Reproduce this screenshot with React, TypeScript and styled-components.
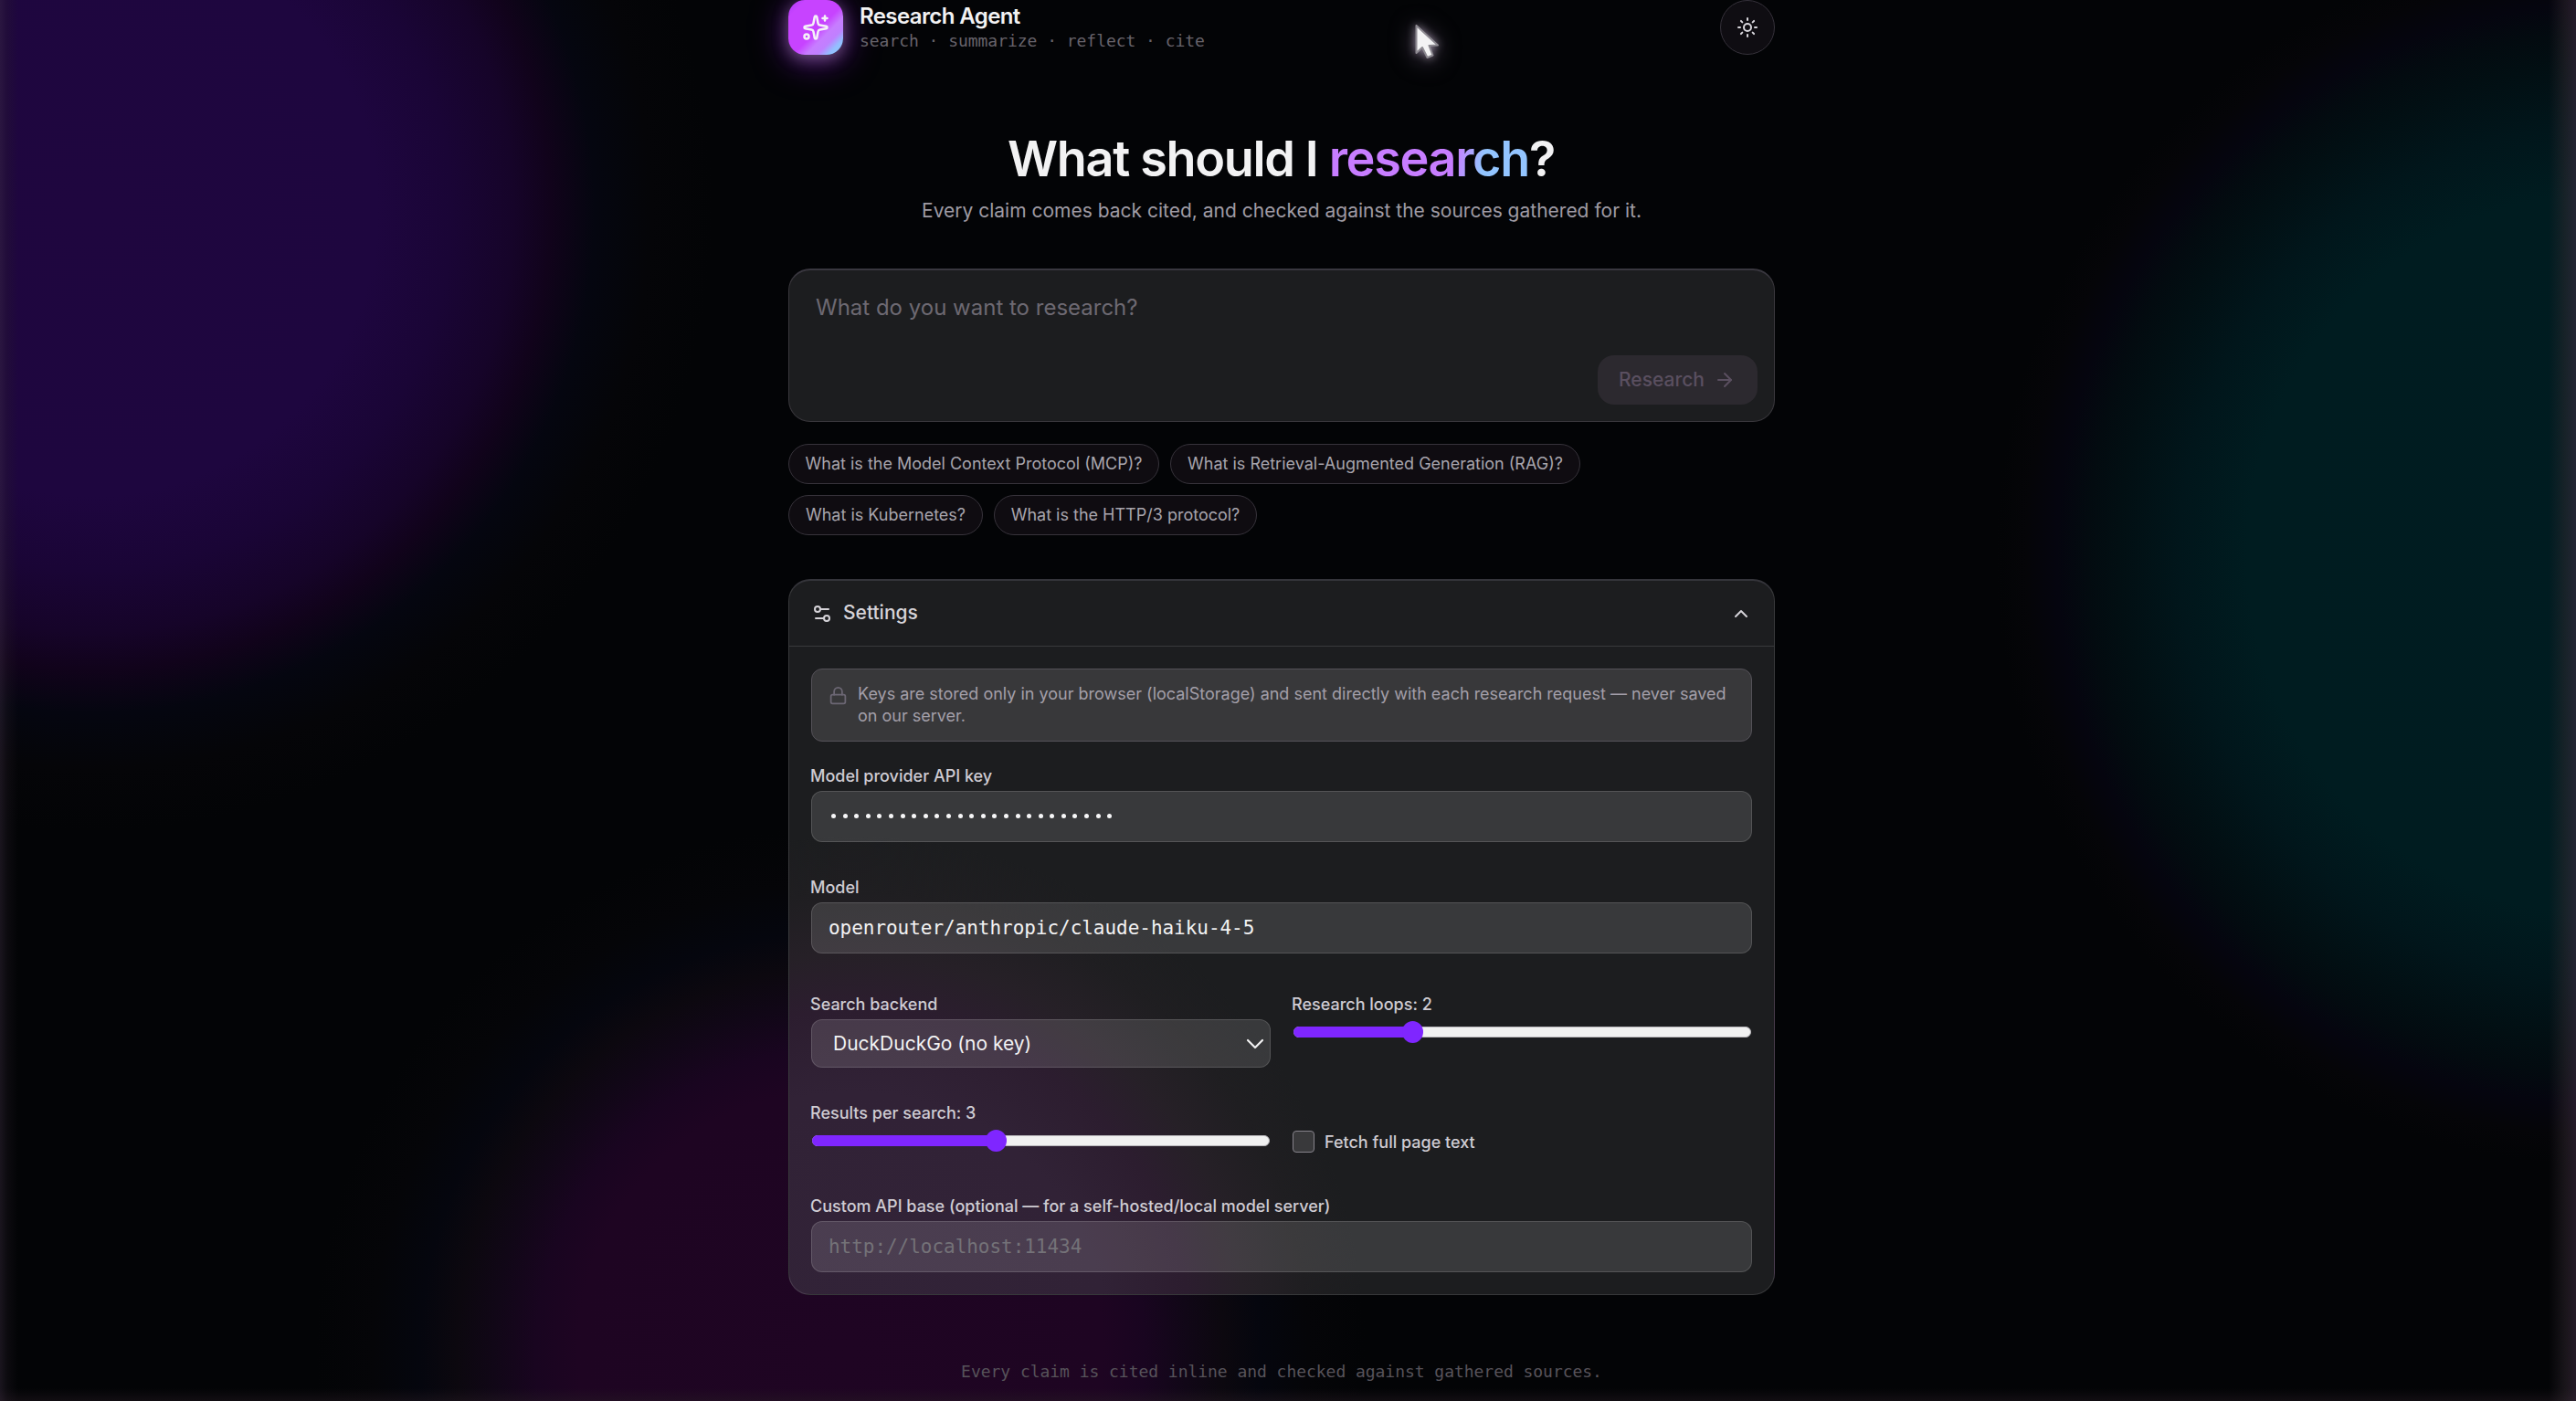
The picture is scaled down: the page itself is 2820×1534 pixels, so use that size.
import React from "react";
import styled, { createGlobalStyle } from "styled-components";
import { Sparkles, Sun, ArrowRight, Settings2, ChevronUp, ChevronDown, Lock } from "lucide-react";

const sans = `Inter, "Liberation Sans", sans-serif`;
const mono = `"DejaVu Sans Mono", "Liberation Mono", monospace`;

const Global = createGlobalStyle`
  *, *::before, *::after { box-sizing: border-box; }
  html, body { margin: 0; background: #030406; }
  body { overflow: hidden; font-family: ${sans}; color: #f2f2f3; }
`;

const Page = styled.div`
  position: relative;
  width: 100%;
  height: 1534px;
  overflow: hidden;
  background:
    linear-gradient(to right, rgba(60, 46, 66, 0.4) 0, rgba(40, 30, 42, 0.25) 8px, transparent 20px),
    linear-gradient(to left, rgba(70, 48, 72, 0.5) 0, rgba(52, 42, 50, 0.45) 12px, transparent 30px),
    linear-gradient(to top, rgba(40, 28, 36, 0.4) 0, transparent 14px),
    radial-gradient(circle 680px at 100px 230px, #1f063f 0, #1e063f 46%, #1a0536 58%, #160429 68%, #11031b 74%, #050610 81%, #050508 90%, rgba(3, 4, 6, 0) 100%),
    radial-gradient(circle 670px at 2855px 607px, #001c21 0, #001c20 59%, #01161b 70%, #020f13 80%, #030b10 85%, #05050f 90%, #050508 95%, rgba(3, 4, 6, 0) 100%),
    radial-gradient(circle 575px at 920px 1480px, #1f0523 0, #1e0522 50%, #190520 58%, #110717 66%, #0c080f 73%, #05060e 80%, #050508 89%, rgba(3, 4, 6, 0) 100%),
    #030406;
`;

const Column = styled.main`
  width: 1080px;
  margin-left: 863px;
  display: flex;
  flex-direction: column;
`;

const Header = styled.header`
  height: 60px;
  display: flex;
  align-items: center;
`;

const Logo = styled.div`
  width: 60px;
  height: 60px;
  border-radius: 18px;
  display: grid;
  place-items: center;
  color: #f5f2f8;
  background: linear-gradient(135deg, #ac38f8 0%, #c743ff 16%, #c743ff 54%, #c77dff 66%, #c080ff 76%, #93bfff 86%, #93c5ff 100%);
  box-shadow: 0 4px 16px rgba(125, 105, 135, 0.75), 0 6px 38px rgba(120, 20, 190, 0.75);
`;

const Brand = styled.div`
  margin-left: 18px;
  display: flex;
  flex-direction: column;
  flex: 1;
`;

const BrandName = styled.span`
  font-size: 24px;
  line-height: 30px;
  font-weight: 600;
  letter-spacing: -0.6px;
`;

const BrandTag = styled.span`
  font-family: ${mono};
  font-size: 18px;
  line-height: 24px;
  letter-spacing: -0.04px;
  color: #67636b;
`;

const ThemeButton = styled.button`
  width: 60px;
  height: 60px;
  padding: 0;
  border-radius: 50%;
  border: 1px solid #35313a;
  background: #0f0d12;
  color: #d8d6dc;
  display: grid;
  place-items: center;
`;

const Hero = styled.section`
  margin-top: 81px;
  text-align: center;
`;

const Title = styled.h1`
  margin: 0 0 0 -1px;
  font-size: 54px;
  line-height: 66px;
  font-weight: 600;
  letter-spacing: -1.35px;
`;

const Accent = styled.span`
  background: linear-gradient(100deg, #c77dff 0%, #c77dff 62%, #93c5ff 76%, #93c5ff 100%);
  -webkit-background-clip: text;
  background-clip: text;
  color: transparent;
`;

const Lead = styled.p`
  margin: 8px 0 0;
  font-size: 21px;
  line-height: 32px;
  color: #9f9ba4;
`;

const Composer = styled.section`
  margin-top: 47px;
  height: 168px;
  border: 1px solid #39373c;
  border-top: 2px solid #39373f;
  border-radius: 24px;
  background: #1c1d1f;
  padding: 23px 18px 18px 29px;
  display: flex;
  flex-direction: column;
  justify-content: space-between;
`;

const Prompt = styled.div`
  font-size: 24px;
  line-height: 36px;
  color: #6d6972;
`;

const Submit = styled.button`
  align-self: flex-end;
  width: 175px;
  height: 54px;
  padding: 0 24px 0 23px;
  border: 0;
  border-radius: 18px;
  background: #2c292f;
  color: #5a4f60;
  font: 500 21px/30px ${sans};
  display: flex;
  align-items: center;
  justify-content: space-between;
`;

const Chips = styled.div`
  margin-top: 24px;
  width: 960px;
  display: flex;
  flex-wrap: wrap;
  gap: 12px;
`;

const Chip = styled.button<{ $w: number }>`
  width: ${(p) => p.$w}px;
  height: 44px;
  padding: 0;
  border: 1px solid #37333b;
  border-radius: 22px;
  background: #0f0c11;
  color: #a8a5ad;
  font: 400 18px/24px ${sans};
  white-space: nowrap;
`;

const Panel = styled.section`
  margin-top: 48px;
  height: 784px;
  border: 1px solid rgba(255, 255, 255, 0.12);
  border-top: 2px solid #34343a;
  border-radius: 24px;
  background:
    radial-gradient(circle 560px at 70px 840px, #322338 0, #312236 50%, #2c1d2f 66%, #262027 77%, #1f1e21 89%, rgba(28, 29, 31, 0) 100%),
    #1c1d1f;
`;

const PanelHeader = styled.div`
  height: 72px;
  padding: 0 24px;
  border-bottom: 1px solid #39393c;
  display: flex;
  align-items: center;
  color: #d5d3d8;
`;

const PanelTitle = styled.span`
  flex: 1;
  margin: -2px 0 0 11px;
  font-size: 21px;
  line-height: 30px;
  font-weight: 500;
`;

const PanelBody = styled.div`
  padding: 24px 24px 0;
  display: flex;
  flex-direction: column;
`;

const Notice = styled.div`
  height: 80px;
  padding: 15px 19px 15px 18px;
  border: 1px solid #545158;
  border-radius: 12px;
  background: #38383a;
  display: flex;
  gap: 11px;
  color: #6c6774;
  svg { flex: none; margin-top: 3px; }
`;

const NoticeText = styled.p`
  margin: 0;
  width: 962px;
  font-size: 18px;
  line-height: 24px;
  color: #a39fa9;
`;

const Field = styled.div<{ $top?: number }>`
  margin-top: ${(p) => p.$top ?? 0}px;
  display: flex;
  flex-direction: column;
`;

const Label = styled.label`
  margin-left: -1px;
  font-size: 18px;
  line-height: 24px;
  height: 28px;
  font-weight: 500;
  color: #cfccd3;
`;

const Box = styled.div<{ $muted?: boolean }>`
  height: 56px;
  padding: 0 18px;
  border: 1px solid rgba(255, 255, 255, 0.14);
  border-radius: 12px;
  background: rgba(255, 255, 255, 0.125);
  font: 400 21px/30px ${mono};
  letter-spacing: -0.04px;
  display: flex;
  align-items: center;
  color: ${(p) => (p.$muted ? "#747278" : "#f2f2f3")};
`;

const Dots = styled.span`
  display: flex;
  gap: 7.6px;
  padding: 0 0 1px 3px;
`;

const Dot = styled.i`
  width: 5px;
  height: 5px;
  border-radius: 50%;
  background: #f7f7f8;
`;

const Grid = styled.div`
  margin-top: 44px;
  display: grid;
  grid-template-columns: 503px 503px;
  column-gap: 24px;
  grid-template-rows: 119px 84px;
`;

const Select = styled.div`
  height: 53px;
  padding: 0 0 0 23px;
  border: 1px solid rgba(255, 255, 255, 0.14);
  border-radius: 12px;
  background: rgba(255, 255, 255, 0.125);
  font-size: 21px;
  display: flex;
  align-items: center;
  justify-content: space-between;
`;

const Track = styled.div`
  margin: 8px 1px 0;
  height: 12px;
  border-radius: 6px;
  background: #f1f1f1;
  border: 1px solid #b9b7bb;
`;

const Filled = styled.div`
  position: relative;
  height: 12px;
  margin: -1px;
  border-radius: 6px 0 0 6px;
  background: #7f26ff;
  &::after {
    content: "";
    position: absolute;
    right: -12px;
    top: -6px;
    width: 23px;
    height: 24px;
    border-radius: 50%;
    background: #7f26ff;
  }
`;

const CheckRow = styled.label`
  height: 24px;
  margin-top: 3px;
  display: flex;
  align-items: center;
  gap: 11px;
  font-size: 18px;
  font-weight: 500;
  color: #cfccd3;
`;

const CheckBox = styled.span`
  width: 24px;
  height: 24px;
  border: 1px solid #86838b;
  border-radius: 4px;
  background: #39393b;
`;

const Footer = styled.footer`
  margin-top: 72px;
  text-align: center;
  font: 400 18px/24px ${mono};
  letter-spacing: -0.04px;
  color: #57535a;
`;

const Pointer = styled.svg`
  position: absolute;
  left: 1549px;
  top: 26px;
  filter: drop-shadow(0 0 5px rgba(190, 175, 200, 0.7)) drop-shadow(0 3px 12px rgba(130, 110, 140, 0.55));
`;

const chips: [string, number][] = [
  ["What is the Model Context Protocol (MCP)?", 406],
  ["What is Retrieval-Augmented Generation (RAG)?", 449],
  ["What is Kubernetes?", 213],
  ["What is the HTTP/3 protocol?", 288],
];

function Slider({ label, ratio }: { label: string; ratio: number }) {
  return (
    <Field>
      <Label>{label}</Label>
      <Track>
        <Filled style={{ width: `${ratio * 100}%` }} />
      </Track>
    </Field>
  );
}

export default function App() {
  return (
    <Page>
      <Global />
      <Column>
        <Header>
          <Logo><Sparkles size={30} strokeWidth={2} /></Logo>
          <Brand>
            <BrandName>Research Agent</BrandName>
            <BrandTag>search · summarize · reflect · cite</BrandTag>
          </Brand>
          <ThemeButton aria-label="Toggle theme"><Sun size={24} strokeWidth={2} /></ThemeButton>
        </Header>
        <Hero>
          <Title>What should I <Accent>research</Accent>?</Title>
          <Lead>Every claim comes back cited, and checked against the sources gathered for it.</Lead>
        </Hero>
        <Composer>
          <Prompt>What do you want to research?</Prompt>
          <Submit>Research <ArrowRight size={24} strokeWidth={2} /></Submit>
        </Composer>
        <Chips>
          {chips.map(([text, w]) => <Chip key={text} $w={w}>{text}</Chip>)}
        </Chips>
        <Panel>
          <PanelHeader>
            <Settings2 size={24} strokeWidth={2} />
            <PanelTitle>Settings</PanelTitle>
            <ChevronUp size={24} strokeWidth={2} />
          </PanelHeader>
          <PanelBody>
            <Notice>
              <Lock size={21} strokeWidth={2} />
              <NoticeText>
                Keys are stored only in your browser (localStorage) and sent directly with each research request — never saved on our server.
              </NoticeText>
            </Notice>
            <Field $top={26}>
              <Label>Model provider API key</Label>
              <Box><Dots>{Array.from({ length: 25 }, (_, i) => <Dot key={i} />)}</Dots></Box>
            </Field>
            <Field $top={38}>
              <Label>Model</Label>
              <Box>openrouter/anthropic/claude-haiku-4-5</Box>
            </Field>
            <Grid>
              <Field>
                <Label>Search backend</Label>
                <Select>DuckDuckGo (no key)<ChevronDown size={32} strokeWidth={1.6} /></Select>
              </Field>
              <Slider label="Research loops: 2" ratio={0.26} />
              <Slider label="Results per search: 3" ratio={0.403} />
              <Field $top={28}>
                <CheckRow><CheckBox />Fetch full page text</CheckRow>
              </Field>
            </Grid>
            <Field $top={18}>
              <Label>Custom API base (optional — for a self-hosted/local model server)</Label>
              <Box $muted>http://localhost:11434</Box>
            </Field>
          </PanelBody>
        </Panel>
        <Footer>Every claim is cited inline and checked against gathered sources.</Footer>
      </Column>
      <Pointer width="28" height="42" viewBox="0 0 28 42">
        <path d="M1.5 2 V32 L8 26 L13.5 37 L19.5 34.5 L15.5 24 L25 23.5 Z" fill="#f3f3f4" stroke="#8d8a91" strokeWidth="2" strokeLinejoin="round" />
      </Pointer>
    </Page>
  );
}
